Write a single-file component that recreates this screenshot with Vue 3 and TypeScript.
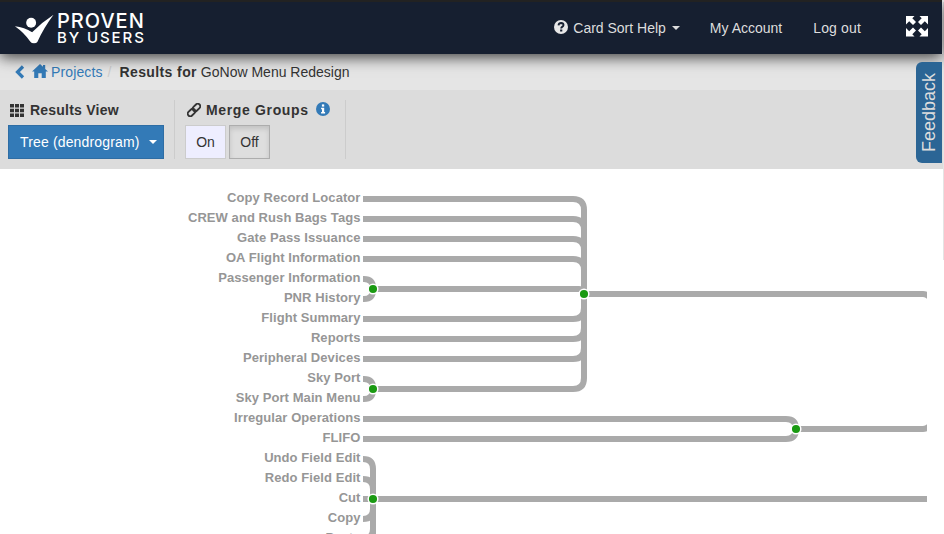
<script setup lang="ts">
interface Leaf { label: string; y: number }
interface Link { d: string }
interface Dot { x: number; y: number }

const labels: string[] = [
  'Copy Record Locator', 'CREW and Rush Bags Tags', 'Gate Pass Issuance', 'OA Flight Information',
  'Passenger Information', 'PNR History', 'Flight Summary', 'Reports', 'Peripheral Devices',
  'Sky Port', 'Sky Port Main Menu', 'Irregular Operations', 'FLIFO', 'Undo Field Edit',
  'Redo Field Edit', 'Cut', 'Copy', 'Paste'
]
const leaves: Leaf[] = labels.map((label, i) => ({ label, y: 199 + i * 20 }))

const elbow = (x0: number, y0: number, x1: number, y1: number, r: number): string => {
  if (y0 === y1) return `M${x0},${y0} H${x1}`
  const s = y1 > y0 ? 1 : -1
  const rr = Math.min(r, Math.abs(y1 - y0))
  return `M${x0},${y0} H${x1 - rr} Q${x1},${y0} ${x1},${y0 + s * rr} V${y1}`
}

const links: Link[] = [
  ...[199, 219, 239, 259, 319, 339, 359].map((y) => ({ d: elbow(363, y, 584, 294, 11) })),
  { d: elbow(373, 289, 584, 294, 5) },
  { d: elbow(373, 389, 584, 294, 11) },
  { d: elbow(363, 279, 373, 289, 9) },
  { d: elbow(363, 299, 373, 289, 9) },
  { d: elbow(363, 379, 373, 389, 9) },
  { d: elbow(363, 399, 373, 389, 9) },
  { d: elbow(363, 419, 796, 429, 10) },
  { d: elbow(363, 439, 796, 429, 10) },
  { d: elbow(363, 459, 373, 499, 10) },
  { d: elbow(363, 479, 373, 499, 10) },
  { d: elbow(363, 499, 373, 499, 0) },
  { d: elbow(363, 519, 373, 499, 10) },
  { d: elbow(363, 539, 373, 499, 10) },
  { d: 'M373,499 V560' },
  { d: 'M584,294 H923 Q929,294 933,302' },
  { d: 'M796,429 H923 Q929,429 933,421' },
  { d: 'M373,499 H940' }
]

const dots: Dot[] = [
  { x: 373, y: 289 }, { x: 373, y: 389 }, { x: 584, y: 294 }, { x: 796, y: 429 }, { x: 373, y: 499 }
]
</script>

<template>
  <div class="page">
    <header class="nav">
      <a class="brand">
        <svg class="brand-mark" width="42" height="32" viewBox="12 12 44 32">
          <circle cx="31" cy="21.5" r="5.2" fill="#fff" />
          <path d="M14,25 Q24,26 32,31.500 Q42,21 54.500,13 Q44,27 37.500,41.500 Q36.500,43 34,43 Q31.500,43 30,41 Q24,32 14,25 Z" fill="#fff" />
        </svg>
        <span class="brand-text">
          <span class="brand-top">PROVEN</span>
          <span class="brand-bottom">BY USERS</span>
        </span>
      </a>
      <nav class="nav-links">
        <a class="nav-link help">
          <svg class="help-icon" width="14" height="14" viewBox="0 0 14 14">
            <circle cx="7" cy="7" r="7" fill="#e8e8e8" />
            <path d="M4.500,5.300 Q4.800,3 7.100,3 Q9.500,3.100 9.500,5 Q9.500,6.100 8.200,6.900 Q7.200,7.500 7.200,8.500" fill="none" stroke="#161f30" stroke-width="1.900" />
            <rect x="6.100" y="9.500" width="2.200" height="2" fill="#161f30" />
          </svg>
          <span>Card Sort Help</span>
          <span class="caret caret-nav"></span>
        </a>
        <a class="nav-link account">My Account</a>
        <a class="nav-link logout">Log out</a>
      </nav>
      <svg class="expand" width="24" height="22" viewBox="0 0 24 22">
        <g fill="#fff">
          <path d="M1,1 H9.500 L7.300,3.200 L11,7 L8,10 L4.200,6.300 L1,9.500 Z" />
          <path d="M23,1 H14.500 L16.700,3.200 L13,7 L16,10 L19.800,6.300 L23,9.500 Z" />
          <path d="M1,21.500 H9.500 L7.300,19.300 L11,15.500 L8,12.500 L4.200,16.200 L1,13 Z" />
          <path d="M23,21.500 H14.500 L16.700,19.300 L13,15.500 L16,12.500 L19.800,16.200 L23,13 Z" />
        </g>
      </svg>
    </header>

    <div class="crumbs">
      <svg class="chev" width="10" height="14" viewBox="0 0 10 14">
        <path d="M8,1.500 L2.500,7 L8,12.500" fill="none" stroke="#337ab7" stroke-width="3.200" />
      </svg>
      <svg class="home" width="16" height="14" viewBox="0 0 16 14">
        <path d="M8,0 L11,2.800 V1 H13.200 V4.900 L16,7.500 H13.800 V14 H9.700 V9.200 H6.300 V14 H2.200 V7.500 H0 Z" fill="#337ab7" />
      </svg>
      <a class="crumb-link">Projects</a>
      <span class="crumb-sep">/</span>
      <span class="crumb-current"><strong>Results for</strong> GoNow Menu Redesign</span>
    </div>

    <section class="toolbar">
      <div class="tool tool-view">
        <div class="tool-title">
          <svg width="14" height="13" viewBox="0 0 14 13">
            <g fill="#333">
              <rect x="0" y="0" width="4" height="3.500" /><rect x="5" y="0" width="4" height="3.500" /><rect x="10" y="0" width="4" height="3.500" />
              <rect x="0" y="4.750" width="4" height="3.500" /><rect x="5" y="4.750" width="4" height="3.500" /><rect x="10" y="4.750" width="4" height="3.500" />
              <rect x="0" y="9.500" width="4" height="3.500" /><rect x="5" y="9.500" width="4" height="3.500" /><rect x="10" y="9.500" width="4" height="3.500" />
            </g>
          </svg>
          <span>Results View</span>
        </div>
        <button class="select-btn">Tree (dendrogram)<span class="caret"></span></button>
      </div>
      <div class="tool tool-merge">
        <div class="tool-title">
          <svg width="14" height="14" viewBox="0 0 14 14">
            <g fill="none" stroke="#333" stroke-width="1.800">
              <rect x="7" y="0.250" width="5" height="8.500" rx="2.500" transform="rotate(45 9.500 4.500)" />
              <rect x="2" y="5.250" width="5" height="8.500" rx="2.500" transform="rotate(45 4.500 9.500)" />
            </g>
          </svg>
          <span>Merge Groups</span>
          <svg class="info" width="14" height="14" viewBox="0 0 14 14">
            <circle cx="7" cy="7" r="7" fill="#337ab7" />
            <rect x="5.900" y="2.400" width="2.300" height="2.200" fill="#fff" />
            <path d="M5.100,5.800 H8.200 V10 H9.100 V11.500 H5.100 V10 H6 V7.200 H5.100 Z" fill="#fff" />
          </svg>
        </div>
        <div class="toggle">
          <button class="toggle-btn on">On</button>
          <button class="toggle-btn off">Off</button>
        </div>
      </div>
    </section>

    <main class="tree">
      <svg class="tree-svg" width="927" height="365" viewBox="0 169 927 365">
        <path v-for="(l, i) in links" :key="i" :d="l.d" fill="none" stroke="#aaa" stroke-width="6" />
        <circle v-for="(n, i) in dots" :key="'n' + i" :cx="n.x" :cy="n.y" r="4.800" fill="#1a9a12" stroke="#fff" stroke-width="1.500" />
        <text v-for="leaf in leaves" :key="leaf.label" class="leaf" x="360.500" :y="leaf.y + 3" text-anchor="end">{{ leaf.label }}</text>
      </svg>
    </main>

    <a class="feedback"><span>Feedback</span></a>
    <div class="rail"></div>
  </div>
</template>

<style>
html, body { margin: 0; background: #fff; }
</style>

<style scoped>
.page {
  position: relative;
  width: 944px;
  height: 534px;
  overflow: hidden;
  display: flex;
  flex-direction: column;
  background: #fff;
  font-family: "Liberation Sans", Arial, sans-serif;
  font-size: 14px;
  color: #333;
}
.nav {
  position: relative;
  z-index: 2;
  box-sizing: border-box;
  height: 54px;
  width: 942px;
  flex: none;
  display: flex;
  align-items: center;
  background: #161f30;
  border-top: 2px solid #222;
  box-shadow: 0 3px 14px rgba(0, 0, 0, 0.75);
  color: #ddd;
}
.brand { display: flex; align-items: center; margin-left: 13px; }
.brand-mark { display: block; margin-top: 2px; }
.brand-text {
  display: flex;
  flex-direction: column;
  margin-left: 2px;
  color: #fff;
  font-family: Inter, "Open Sans", sans-serif;
  line-height: 1;
}
.brand-top { font-size: 20px; font-weight: 500; letter-spacing: 1px; height: 19px; }
.brand-bottom { font-size: 15px; font-weight: 500; letter-spacing: 1.9px; }
.nav-links { display: flex; align-items: center; margin-left: auto; }
.nav-link { display: flex; align-items: center; color: #ddd; }
.help-icon { margin-right: 5px; margin-top: -2px; }
.account { margin-left: 30px; }
.logout { margin-left: 31px; letter-spacing: 0.15px; }
.caret {
  display: inline-block;
  width: 0;
  height: 0;
  border-top: 4px solid currentColor;
  border-left: 4px solid transparent;
  border-right: 4px solid transparent;
  margin-left: 9px;
}
.caret-nav { margin-left: 6px; }
.expand { margin-left: 44px; margin-right: 13px; margin-top: -5px; flex: none; }

.crumbs {
  box-sizing: border-box;
  height: 36px;
  flex: none;
  display: flex;
  align-items: center;
  padding: 0 0 0 15px;
  background: #e5e5e5;
}
.chev { margin-right: 7px; }
.home { margin-right: 3px; margin-top: -2px; }
.crumb-link { color: #337ab7; letter-spacing: 0.12px; }
.crumb-sep { color: #ccc; margin: 0 8px 0 5px; }
.crumb-current { white-space: pre-wrap; }
.crumb-current strong { letter-spacing: 0.4px; }

.toolbar {
  box-sizing: border-box;
  height: 79px;
  flex: none;
  display: flex;
  background: #dcdcdc;
  padding: 10px 0 10px 8px;
}
.tool { display: flex; flex-direction: column; }
.tool-view { width: 166px; border-right: 1px solid #ccc; margin-right: 10px; }
.tool-merge { width: 160px; border-right: 1px solid #ccc; }
.tool-title {
  height: 25px;
  display: flex;
  align-items: center;
  font-weight: 700;
  font-size: 14px;
  letter-spacing: 0.22px;
  color: #333;
  padding: 0 0 5px 2px;
  box-sizing: border-box;
}
.tool-title span { margin-left: 6px; }
.tool-merge .tool-title { letter-spacing: 0.65px; }
.tool-merge .tool-title span { margin-left: 5px; }
.tool-title .info { margin-left: 7px; margin-top: -3px; }
.select-btn {
  box-sizing: border-box;
  width: 156px;
  height: 34px;
  font: inherit;
  color: #fff;
  letter-spacing: 0.15px;
  background: #337ab7;
  border: 1px solid #2e6da4;
  padding: 0 0 0 11px;
  display: flex;
  align-items: center;
  border-radius: 0;
}
.toggle { display: flex; gap: 3px; }
.toggle-btn {
  box-sizing: border-box;
  width: 41px;
  height: 34px;
  font: inherit;
  color: #333;
  padding: 0;
  border-radius: 0;
}
.on { background: #eeeeff; border: 1px solid #ccc; }
.off {
  background: #dedede;
  border: 1px solid #adadad;
  box-shadow: inset 0 3px 5px rgba(0, 0, 0, 0.125);
}

.tree { flex: 1; min-height: 0; }
.tree-svg { display: block; }
.leaf {
  font-family: "Liberation Sans", Arial, sans-serif;
  font-size: 13px;
  font-weight: 700;
  letter-spacing: 0.07px;
  fill: #969696;
}

.feedback {
  position: absolute;
  z-index: 3;
  top: 62px;
  right: 2px;
  width: 26px;
  height: 101px;
  box-sizing: border-box;
  background: #2b6595;
  color: #ddd;
  border-radius: 6px 0 0 6px;
  display: flex;
  align-items: center;
  justify-content: center;
  font-size: 18px;
}
.feedback span { writing-mode: vertical-rl; transform: rotate(180deg); }
.rail {
  position: absolute;
  top: 2px;
  right: 0;
  width: 1px;
  height: 258px;
  background: #e4e4e4;
}
</style>
